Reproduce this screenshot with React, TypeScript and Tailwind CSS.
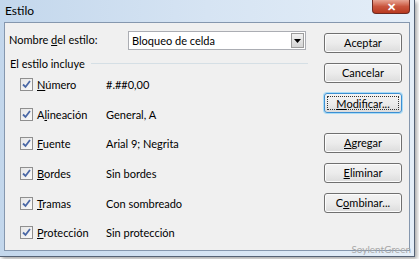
import type { ReactNode } from "react";

const font = { fontFamily: 'Lato, "Noto Sans", sans-serif' };

const rows: { pre: string; key: string; post: string; value: string }[] = [
  { pre: "", key: "N", post: "úmero", value: "#.##0,00" },
  { pre: "A", key: "l", post: "ineación", value: "General, A" },
  { pre: "", key: "F", post: "uente", value: "Arial 9; Negrita" },
  { pre: "", key: "B", post: "ordes", value: "Sin bordes" },
  { pre: "", key: "T", post: "ramas", value: "Con sombreado" },
  { pre: "", key: "P", post: "rotección", value: "Sin protección" },
];

const CheckBox = () => (
  <div className="flex h-[13px] w-[13px] items-center justify-center border border-[#8f8f8f] bg-gradient-to-br from-[#e6e6e6] to-[#fafafa]">
    <svg width="9" height="9" viewBox="0 0 9 9">
      <path d="M1 4.5 L3.5 7 L8 1" fill="none" stroke="#4a68a6" strokeWidth="1.8" />
    </svg>
  </div>
);

const Button = ({ children, focused }: { children: ReactNode; focused?: boolean }) => (
  <div
    className={
      "flex h-[20px] w-[78px] items-center justify-center rounded-[3px] border bg-gradient-to-b from-[#f3f3f3] via-[#ececec] to-[#dcdcdc] text-[11px] text-black " +
      (focused ? "border-[#3c8fd3] shadow-[0_0_0_1px_#a9dcf6]" : "border-[#707070] shadow-[inset_0_0_0_1px_#fcfcfc]")
    }
  >
    {focused ? (
      <span className="mx-[2px] flex h-[14px] flex-1 items-center justify-center border border-dotted border-[#333] leading-none">
        {children}
      </span>
    ) : (
      <span className="leading-[14px]">{children}</span>
    )}
  </div>
);

export default function App() {
  return (
    <div className="relative h-[259px] w-[419px] overflow-hidden bg-white" style={font}>
      <div className="flex h-[257px] w-[415px] flex-col border-b border-r border-[#556275] bg-gradient-to-r from-[#c3d7ec] via-[#d6e4f3] to-[#e4eef8] shadow-[2px_2px_4px_rgba(0,0,0,0.35)]">
        {/* title bar */}
        <div className="relative flex h-[22px] items-center pl-[5px]">
          <span className="text-[12px] leading-none text-black">Estilo</span>
          <div className="absolute right-[4px] top-0 flex h-[14px] w-[38px] items-center justify-center rounded-b-[4px] border border-t-0 border-[#6e2a22] bg-gradient-to-b from-[#e7a493] via-[#c9553d] to-[#b8391f]">
            <span className="text-[11px] font-bold leading-none text-white">✕</span>
          </div>
        </div>
        {/* client area */}
        <div className="ml-[4px] mr-[4px] flex h-[229px] w-[406px] border border-[#8597ae] bg-[#f0f0f0] text-[11px] text-black">
          <div className="flex w-[303px] flex-col pl-[4px] pt-[8px]">
            <div className="flex h-[19px] items-center">
              <span className="w-[119px]">
                Nombre <u>d</u>el estilo:
              </span>
              <div className="flex h-[19px] w-[178px] items-center border border-[#abadb3] bg-white">
                <span className="flex-1 pl-[3px] leading-none">Bloqueo de celda</span>
                <div className="mr-[1px] flex h-[15px] w-[13px] items-center justify-center border border-[#9c9c9c] bg-gradient-to-b from-[#f2f2f2] to-[#d4d4d4]">
                  <svg width="7" height="4" viewBox="0 0 7 4">
                    <path d="M0 0 H7 L3.5 4 Z" fill="#000" />
                  </svg>
                </div>
              </div>
            </div>
            <div className="mt-[6px] flex h-[14px] items-center pl-[1px]">
              <span className="leading-none">El estilo incluye</span>
              <div className="ml-[6px] h-px flex-1 bg-[#d5dfe5]" />
            </div>
            <div className="flex flex-col pl-[11px]">
              {rows.map((r) => (
                <div key={r.value} className="flex h-[29.6px] items-center">
                  <CheckBox />
                  <span className="ml-[4px] w-[69px] leading-none">
                    {r.pre}
                    <u>{r.key}</u>
                    {r.post}
                  </span>
                  <span className="leading-none">{r.value}</span>
                </div>
              ))}
            </div>
          </div>
          <div className="ml-[16px] flex flex-col gap-[10px] pt-[10px]">
            <Button>Aceptar</Button>
            <Button>Cancelar</Button>
            <Button focused>
              <u>M</u>odificar...
            </Button>
            <div className="mt-[10px] flex flex-col gap-[10px]">
              <Button>
                <u>A</u>gregar
              </Button>
              <Button>
                <u>E</u>liminar
              </Button>
              <Button>
                C<u>o</u>mbinar...
              </Button>
            </div>
          </div>
        </div>
      </div>
      <span className="absolute right-[8px] top-[244px] text-[10px] leading-none text-[#a8a8a8]">SoylentGreen</span>
    </div>
  );
}
